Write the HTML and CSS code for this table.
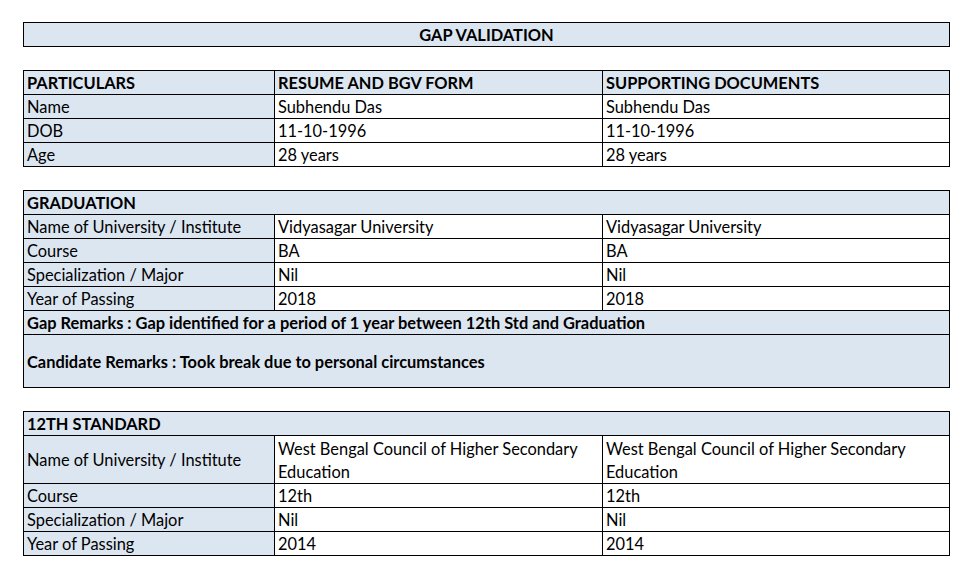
FILE: index.html
```html
<!DOCTYPE html>
<html lang="en">
<head>
<meta charset="utf-8">
<title>Gap Validation</title>
<link rel="stylesheet" href="styles.css">
</head>
<body>
<main class="page">
  <div class="sheet title-sheet">
    <div class="cell hd center span3">GAP VALIDATION</div>
  </div>

  <div class="sheet">
    <div class="cell hd">PARTICULARS</div>
    <div class="cell hd">RESUME AND BGV FORM</div>
    <div class="cell hd">SUPPORTING DOCUMENTS</div>

    <div class="cell lbl">Name</div>
    <div class="cell">Subhendu Das</div>
    <div class="cell">Subhendu Das</div>

    <div class="cell lbl">DOB</div>
    <div class="cell">11-10-1996</div>
    <div class="cell">11-10-1996</div>

    <div class="cell lbl">Age</div>
    <div class="cell">28 years</div>
    <div class="cell">28 years</div>
  </div>

  <div class="sheet">
    <div class="cell hd span3">GRADUATION</div>

    <div class="cell lbl">Name of University / Institute</div>
    <div class="cell">Vidyasagar University</div>
    <div class="cell">Vidyasagar University</div>

    <div class="cell lbl">Course</div>
    <div class="cell">BA</div>
    <div class="cell">BA</div>

    <div class="cell lbl">Specialization / Major</div>
    <div class="cell">Nil</div>
    <div class="cell">Nil</div>

    <div class="cell lbl">Year of Passing</div>
    <div class="cell">2018</div>
    <div class="cell">2018</div>

    <div class="cell hd span3">Gap Remarks : Gap identified for a period of 1 year between 12th Std and Graduation</div>
    <div class="cell hd span3 tall">Candidate Remarks : Took break due to personal circumstances</div>
  </div>

  <div class="sheet">
    <div class="cell hd span3">12TH STANDARD</div>

    <div class="cell lbl double">Name of University / Institute</div>
    <div class="cell double">West Bengal Council of Higher Secondary Education</div>
    <div class="cell double">West Bengal Council of Higher Secondary Education</div>

    <div class="cell lbl">Course</div>
    <div class="cell">12th</div>
    <div class="cell">12th</div>

    <div class="cell lbl">Specialization / Major</div>
    <div class="cell">Nil</div>
    <div class="cell">Nil</div>

    <div class="cell lbl">Year of Passing</div>
    <div class="cell">2014</div>
    <div class="cell">2014</div>
  </div>
</main>
</body>
</html>
```
FILE: styles.css
```css
html, body {
  margin: 0;
  padding: 0;
  background: #ffffff;
}

body {
  font-family: "Lato", "Open Sans", sans-serif;
  font-size: 16.4px;
  color: #000000;
}

.page {
  display: flex;
  flex-direction: column;
  align-items: flex-start;
  gap: 23px;
  padding: 22px 0 0 23px;
}

.sheet {
  display: grid;
  grid-template-columns: 250px 327px 346px;
  grid-auto-rows: minmax(23px, auto);
  gap: 1px;
  padding: 1px;
  background: #000000;
}

.cell {
  display: flex;
  align-items: center;
  padding: 0 3px;
  line-height: 23px;
  background: #ffffff;
  white-space: normal;
}

.hd {
  background: #dce6f1;
  font-weight: 700;
}

.lbl {
  background: #dce6f1;
}

.span3 {
  grid-column: 1 / span 3;
}

.center {
  justify-content: center;
}

.tall {
  height: 52px;
}

.double {
  height: 47px;
}
```
